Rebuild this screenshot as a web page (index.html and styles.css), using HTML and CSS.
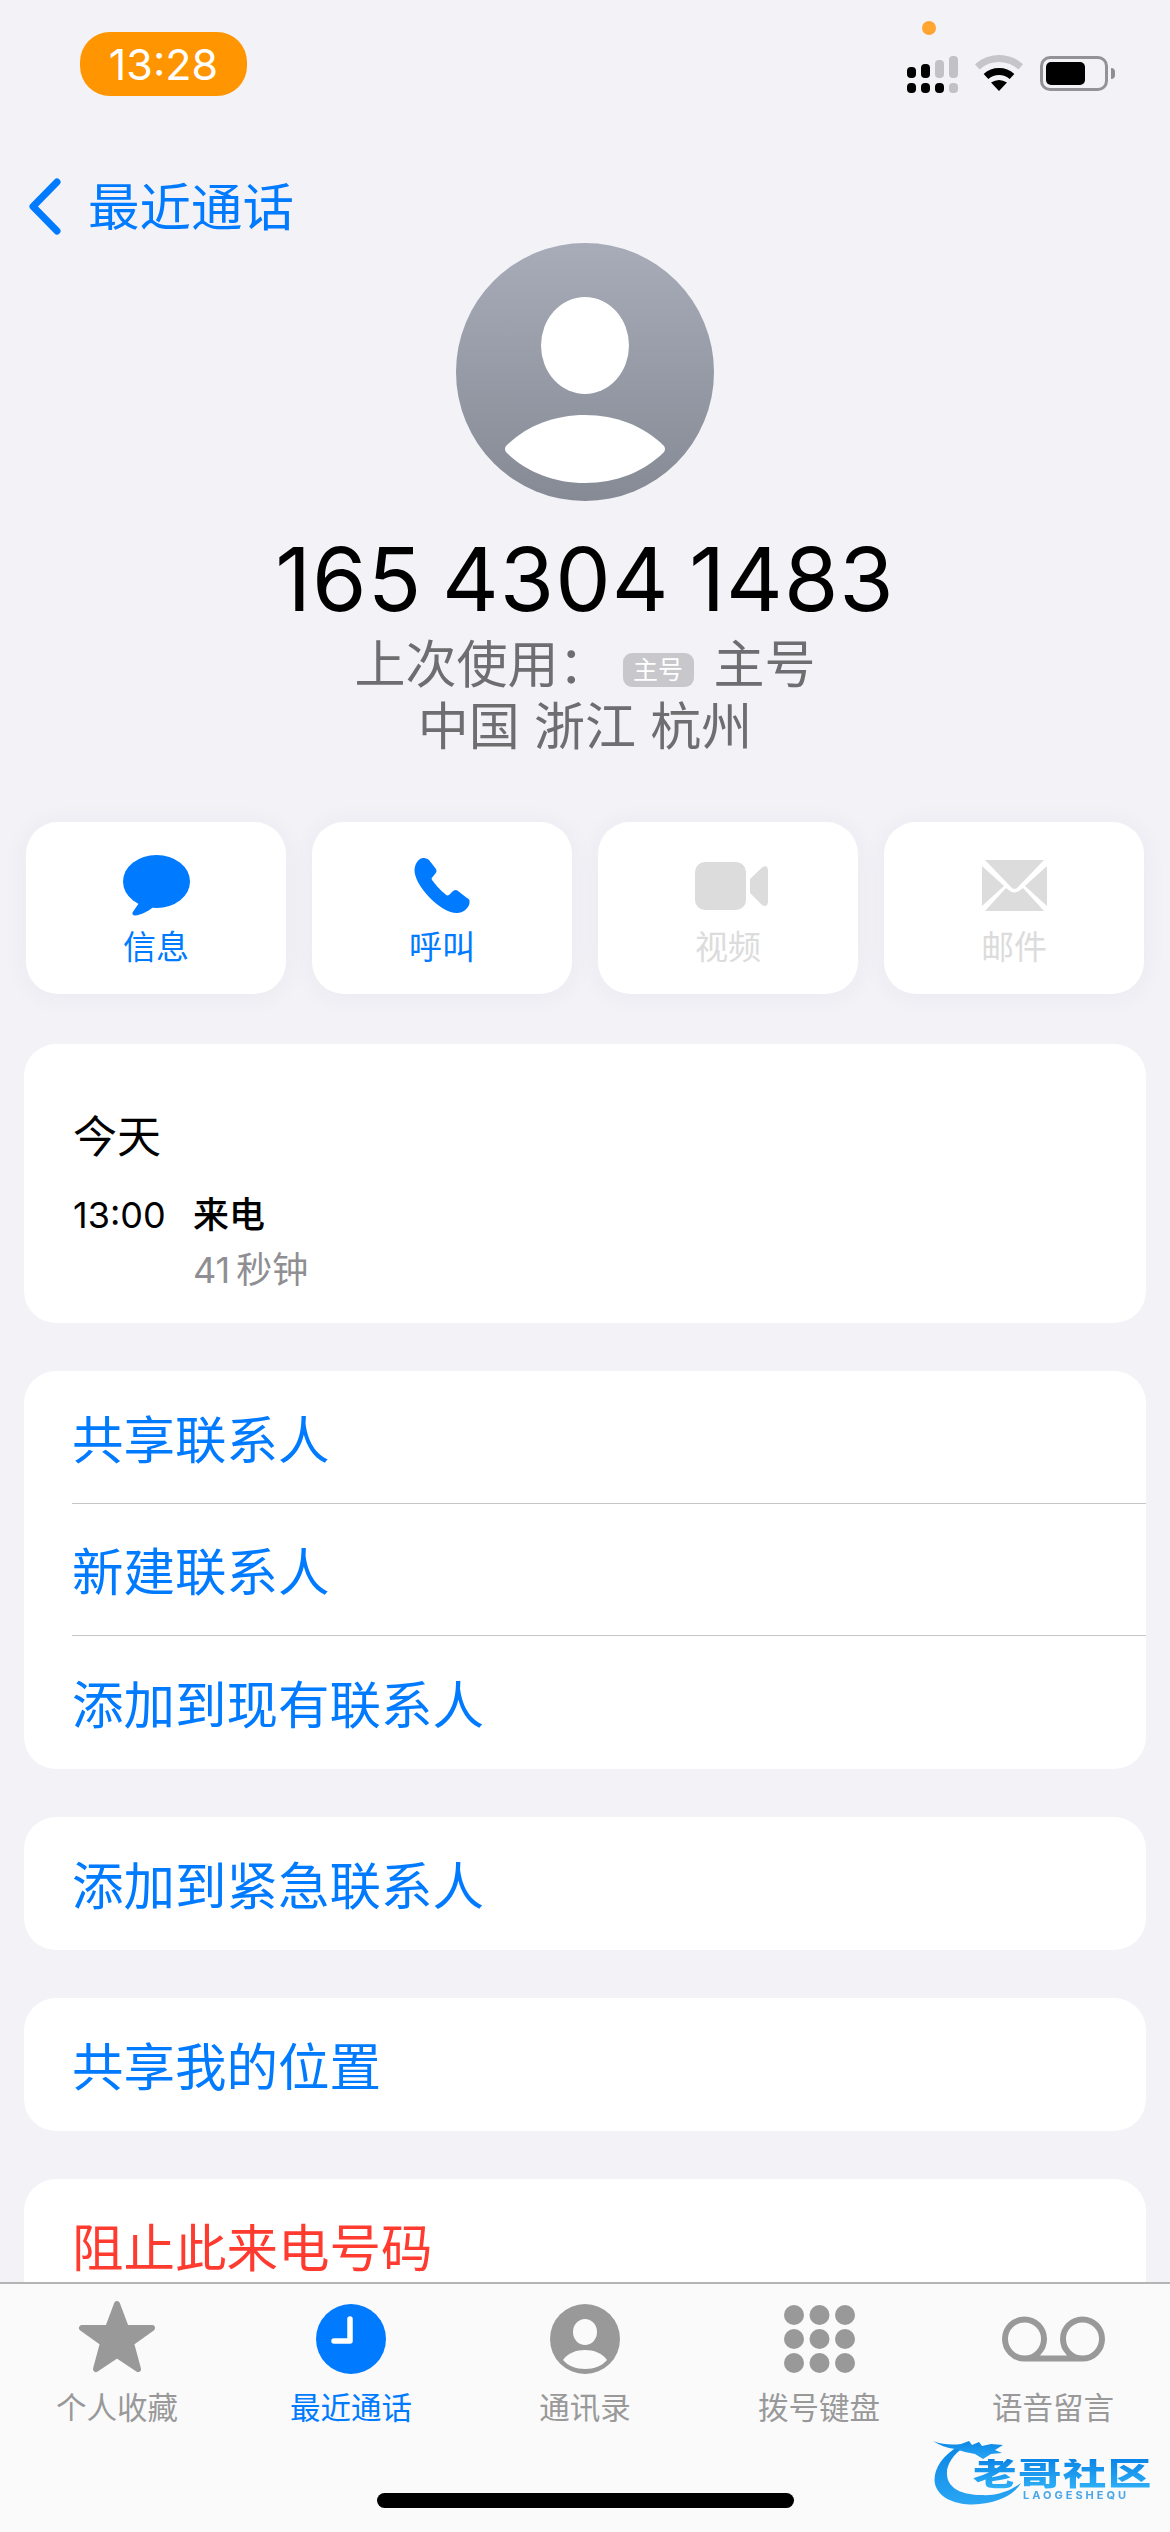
FILE: index.html
```html
<!DOCTYPE html>
<html lang="zh">
<head>
	<meta charset="utf-8">
	<link rel="stylesheet" href="styles.css">
	<title>最近通话</title>
</head>
<body>
	<div class="screen">
		<div class="status">
			<div class="clock-pill">13:28</div>
			<span class="mic-dot"></span>
			<div class="status-icons">
				<svg class="signal" width="51" height="37" viewBox="0 0 51 37">
					<rect x="0" y="11" width="9" height="11" rx="4"/>
					<rect x="14" y="8" width="9" height="14" rx="4"/>
					<rect class="off" x="28" y="4" width="9" height="18" rx="4"/>
					<rect class="off" x="42" y="0" width="9" height="22" rx="4"/>
					<rect x="0" y="27" width="9" height="10" rx="4"/>
					<rect x="14" y="27" width="9" height="10" rx="4"/>
					<rect x="28" y="27" width="9" height="10" rx="4"/>
					<rect class="off" x="42" y="27" width="9" height="10" rx="4"/>
				</svg>
				<svg class="wifi" width="48" height="36" viewBox="0 0 48 36">
					<path class="wifi-off" d="M2.3 11.8A32.5 32.5 0 0 1 45.7 11.8"/>
					<path class="wifi-on" d="M11 21.5A19.5 19.5 0 0 1 37 21.5"/>
					<path d="M24 36L16 27.5Q24 22.5 32 27.5Z"/>
				</svg>
				<div class="battery">
					<div class="battery-level"></div>
				</div>
				<span class="battery-tip"></span>
			</div>
		</div>

		<div class="content">
			<div class="nav">
				<svg class="chevron" width="33" height="57" viewBox="0 0 33 57">
					<path d="M29 4L5 28.5L29 53"/>
				</svg>
				<span class="nav-title">最近通话</span>
			</div>

			<div class="avatar">
				<svg width="258" height="258" viewBox="0 0 258 258">
					<defs>
						<linearGradient id="avatarFill" x1="0" y1="0" x2="0" y2="1">
							<stop offset="0" stop-color="#a7acb8"/>
							<stop offset="1" stop-color="#858a95"/>
						</linearGradient>
					</defs>
					<circle cx="129" cy="129" r="129" fill="url(#avatarFill)"/>
					<ellipse cx="129" cy="102.5" rx="44" ry="48.5" fill="#fff"/>
					<path d="M50 203C70 183 98 172 129 172C160 172 188 183 208 203Q210 206 208 209C188 229 160 240 129 240C98 240 70 229 50 209Q48 206 50 203Z" fill="#fff"/>
				</svg>
			</div>

			<div class="number">165 4304 1483</div>
			<div class="sub">上次使用：<span class="sim-tag">主号</span>主号</div>
			<div class="sub">中国 浙江 杭州</div>

			<div class="actions">
				<div class="action">
					<div class="action-icon">
						<svg width="67" height="61" viewBox="0 0 67 61">
							<ellipse cx="33.5" cy="26.5" rx="33.5" ry="26.5"/>
							<path d="M16 48L9.5 57.5Q9 60.5 12 60.5C18 60 25 56 30 52.5Z"/>
						</svg>
					</div>
					<span>信息</span>
				</div>
				<div class="action">
					<div class="action-icon">
						<svg width="56" height="55" viewBox="0 0 56 55">
							<path d="M9 0C6 0 1 4 .5 12C0 26 25 55 43 55C49 55 55 50 55.5 45C56 42 55 41 53 40L44 33C42 31 40 32 38 34L35 37C33 38 32 37 30 35C26 32 21 26 18 22C17 20 18 19.5 19 18.5L21 16C22.5 14.5 23 13 22 11L15 2C13 .5 11 0 9 0Z"/>
						</svg>
					</div>
					<span>呼叫</span>
				</div>
				<div class="action off">
					<div class="action-icon">
						<svg class="video" width="73" height="48" viewBox="0 0 73 48">
							<rect width="51" height="48" rx="10"/>
							<path d="M55 17L67 5.500Q73 2 73 9V39Q73 46 67 43L55 31Z"/>
						</svg>
					</div>
					<span>视频</span>
				</div>
				<div class="action off">
					<div class="action-icon">
						<svg width="65" height="51" viewBox="0 0 65 51">
							<path d="M3 0H62L36 27Q32.500 31 29 27Z"/>
							<path d="M0 6L22 26L0 46Z"/>
							<path d="M65 6L43 26L65 46Z"/>
							<path d="M3 51L24 28L28 31Q32.500 34 37 31L41 28L62 51Z"/>
						</svg>
					</div>
					<span>邮件</span>
				</div>
			</div>

			<div class="card calls">
				<div class="calls-day">今天</div>
				<div class="call">
					<span class="call-time">13:00</span>
					<div>
						<div class="call-type">来电</div>
						<div class="call-length">41 秒钟</div>
					</div>
				</div>
			</div>

			<div class="card">
				<div class="row"><span>共享联系人</span></div>
				<div class="row"><span>新建联系人</span></div>
				<div class="row"><span>添加到现有联系人</span></div>
			</div>

			<div class="card">
				<div class="row"><span>添加到紧急联系人</span></div>
			</div>

			<div class="card">
				<div class="row"><span>共享我的位置</span></div>
			</div>

			<div class="card">
				<div class="row danger"><span>阻止此来电号码</span></div>
			</div>
		</div>

		<div class="tabbar">
			<div class="tabs">
				<div class="tab">
					<div class="tab-icon">
						<svg width="76" height="74" viewBox="0 2 76 74">
							<path class="star" d="M38 4L47 28H73L52 43L59 69L38 55L17 69L24 43L3 28H29Z"/>
						</svg>
					</div>
					<span>个人收藏</span>
				</div>
				<div class="tab active">
					<div class="tab-icon">
						<svg width="70" height="70" viewBox="0 0 70 70">
							<circle cx="35" cy="35" r="35"/>
							<path class="hands" d="M34 15V37H18"/>
						</svg>
					</div>
					<span>最近通话</span>
				</div>
				<div class="tab">
					<div class="tab-icon">
						<svg width="70" height="70" viewBox="0 0 70 70">
							<circle cx="35" cy="35" r="35"/>
							<ellipse class="cutout" cx="35" cy="28" rx="12" ry="13"/>
							<path class="cutout" d="M13 56C18 49 26 46 35 46C44 46 52 49 57 56C52 62 44 65 35 65C26 65 18 62 13 56Z"/>
						</svg>
					</div>
					<span>通讯录</span>
				</div>
				<div class="tab">
					<div class="tab-icon">
						<svg width="71" height="70" viewBox="0 0 71 70">
							<circle cx="10" cy="11" r="10"/>
							<circle cx="35.500" cy="11" r="10"/>
							<circle cx="61" cy="11" r="10"/>
							<circle cx="10" cy="35" r="10"/>
							<circle cx="35.500" cy="35" r="10"/>
							<circle cx="61" cy="35" r="10"/>
							<circle cx="10" cy="59" r="10"/>
							<circle cx="35.500" cy="59" r="10"/>
							<circle cx="61" cy="59" r="10"/>
						</svg>
					</div>
					<span>拨号键盘</span>
				</div>
				<div class="tab">
					<div class="tab-icon">
						<svg width="103" height="46" viewBox="0 0 103 46">
							<path class="tape" d="M22.500 42.500H80.500A19.500 19.500 0 1 0 61 23A19.500 19.500 0 0 0 80.500 42.500M22.500 42.500A19.500 19.500 0 1 1 42 23A19.500 19.500 0 0 1 22.500 42.500"/>
						</svg>
					</div>
					<span>语音留言</span>
				</div>
			</div>
			<div class="home-bar"></div>

			<!-- community mark laid over the corner of the bar -->
			<div class="stamp">
				<svg class="stamp-dragon" width="112" height="70" viewBox="0 0 112 70">
					<defs>
						<linearGradient id="dragonFill" x1="0" y1="0" x2="0" y2="1">
							<stop offset="0" stop-color="#0a86e6"/>
							<stop offset="1" stop-color="#2aa6f4"/>
						</linearGradient>
					</defs>
					<path d="M26 9C6 20 -2 38 3 50C10 66 34 70 54 66C70 63 82 56 88 46C76 55 62 59 48 58C30 58 15 52 14 38C13 28 20 18 30 11Z" fill="url(#dragonFill)"/>
					<path d="M0 4C10 8 20 8 28 7L36 4L39 8L46 5L49 9L58 7L70 8L62 13L69 16L58 17L50 22L42 17L32 15L22 12C14 11 6 8 0 4Z" fill="url(#dragonFill)"/>
				</svg>
				<div class="stamp-name">老哥社区</div>
				<div class="stamp-latin">LAOGESHEQU</div>
			</div>
		</div>
	</div>
</body>
</html>
```

FILE: styles.css
```css
html, body {
	margin: 0;
	padding: 0;
}

body {
	font-family: Inter, "Noto Sans CJK SC", sans-serif;
	background-color: #f2f2f7;
	color: #000;
}

.screen {
	position: relative;
	display: flex;
	flex-direction: column;
	width: 1170px;
	height: 2532px;
	overflow: hidden;
}

/* status bar */
.status {
	position: relative;
	display: flex;
	justify-content: space-between;
	flex: none;
	height: 110px;
}

.clock-pill {
	width: 167px;
	height: 64px;
	margin: 32px 0 0 80px;
	border-radius: 30px;
	background-color: #ff9500;
	color: #fff;
	font-size: 43px;
	line-height: 64px;
	text-align: center;
}

.mic-dot {
	position: absolute;
	left: 922px;
	top: 21px;
	width: 14px;
	height: 14px;
	border-radius: 50%;
	background-color: #ffa530;
}

.status-icons {
	display: flex;
	align-items: flex-start;
	margin: 56px 55px 0 0;
}

.signal {
	fill: #000;
}

.signal .off {
	fill: #c2c2c6;
}

.wifi {
	margin: -1px 0 0 17px;
}

.wifi-off, .wifi-on {
	fill: none;
	stroke-width: 7;
}

.wifi-off {
	stroke: #c6c6c8;
}

.wifi-on {
	stroke: #000;
}

.battery {
	box-sizing: border-box;
	width: 68px;
	height: 35px;
	margin-left: 17px;
	padding: 3px;
	border: 3px solid #939397;
	border-radius: 10px;
}

.battery-level {
	width: 39px;
	height: 23px;
	border-radius: 5px;
	background-color: #000;
}

.battery-tip {
	width: 4px;
	height: 11px;
	margin: 12px 0 0 3px;
	border-radius: 0 5px 5px 0;
	background-color: #8e8e93;
}

/* scrolling part */
.content {
	flex: 1;
	min-height: 0;
	overflow: hidden;
}

.nav {
	display: flex;
	align-items: center;
	height: 57px;
	margin-top: 68px;
	padding-left: 28px;
	color: #007aff;
}

.chevron {
	fill: none;
	stroke: #007aff;
	stroke-width: 7;
	stroke-linecap: round;
	stroke-linejoin: round;
}

.nav-title {
	margin: 2px 0 0 27px;
	font-size: 51.500px;
	line-height: 57px;
}

.avatar {
	display: flex;
	justify-content: center;
	margin-top: 8px;
}

.avatar svg {
	display: block;
}

.number {
	margin-top: 28px;
	font-size: 88px;
	letter-spacing: 1px;
	word-spacing: -6px;
	line-height: 100px;
	text-align: center;
}

.sub {
	color: #6e6e70;
	font-size: 51px;
	line-height: 62px;
	text-align: center;
}

.number + .sub {
	margin-top: 5px;
}

.sim-tag {
	display: inline-block;
	width: 71px;
	height: 34px;
	margin: 0 20px 0 13px;
	border-radius: 9px;
	background-color: #c7c7cc;
	color: #fff;
	font-size: 25px;
	line-height: 34px;
	vertical-align: 4px;
}

.actions {
	display: flex;
	gap: 26px;
	margin: 64px 26px 0;
}

.action {
	display: flex;
	flex-direction: column;
	align-items: center;
	width: 260px;
	height: 172px;
	border-radius: 32px;
	background-color: #fff;
	box-shadow: 0 2px 26px rgba(60, 60, 90, 0.05);
	color: #007aff;
	font-size: 33px;
	line-height: 40px;
}

.action.off {
	color: #dcdcdc;
}

.action-icon {
	display: flex;
	align-items: center;
	justify-content: center;
	height: 61px;
	margin: 33px 0 11px;
}

.action-icon svg {
	fill: currentColor;
}

.action-icon .video {
	margin-left: 7px;
}

.card {
	margin: 48px 24px 0;
	border-radius: 32px;
	background-color: #fff;
}

.calls {
	box-sizing: border-box;
	height: 279px;
	margin-top: 50px;
	padding: 63px 0 0 49px;
}

.calls-day {
	font-size: 44px;
	line-height: 60px;
}

.call {
	display: flex;
	margin-top: 23px;
	font-size: 36px;
	line-height: 50px;
}

.call-time {
	width: 120px;
}

.call-type {
	font-weight: 500;
}

.call-length {
	margin-top: 5px;
	color: #8e8e93;
	word-spacing: -4px;
}

.row {
	box-sizing: border-box;
	display: flex;
	align-items: center;
	height: 133px;
	margin-left: 48px;
	padding-bottom: 2px;
	color: #007aff;
	font-size: 51.500px;
}

.row:not(:only-child) {
	height: 132px;
}

.row + .row {
	border-top: 1px solid #c6c6c8;
}

.row + .row:last-child {
	height: 134px;
}

.danger {
	color: #ff3b30;
}

/* tab bar */
.tabbar {
	position: relative;
	flex: none;
	box-sizing: border-box;
	height: 250px;
	border-top: 2px solid #b4b4b4;
	background-color: #fafafb;
}

.tabs {
	display: grid;
	grid-template-columns: repeat(5, 1fr);
	padding-top: 18px;
}

.tab {
	display: flex;
	flex-direction: column;
	align-items: center;
	color: #999;
	font-size: 30.500px;
	line-height: 40px;
}

.tab.active {
	color: #007aff;
}

.tab-icon {
	display: flex;
	align-items: center;
	justify-content: center;
	height: 74px;
	margin-bottom: 12px;
}

.tab-icon svg {
	fill: currentColor;
	overflow: visible;
}

.star {
	stroke: currentColor;
	stroke-width: 6;
	stroke-linejoin: round;
}

.hands {
	fill: none;
	stroke: #fff;
	stroke-width: 5.500;
	stroke-linecap: round;
	stroke-linejoin: round;
}

.cutout {
	fill: #fafafb;
}

.tape {
	fill: none;
	stroke: currentColor;
	stroke-width: 6;
}

.home-bar {
	width: 417px;
	height: 15px;
	margin: 65px auto 0;
	border-radius: 8px;
	background-color: #000;
}

.stamp {
	position: absolute;
	left: 933px;
	top: 153px;
	width: 222px;
	height: 70px;
	filter: blur(0.7px);
}

.stamp-dragon {
	position: absolute;
	left: 0;
	top: 0;
}

.stamp-name {
	position: absolute;
	left: 40px;
	top: 22px;
	font-size: 32px;
	font-weight: 900;
	letter-spacing: 1px;
	line-height: 30px;
	white-space: nowrap;
	transform: scaleX(1.36);
	transform-origin: left;
	background-image: linear-gradient(#0b85e6, #2fb0f7);
	-webkit-background-clip: text;
	background-clip: text;
	color: transparent;
}

.stamp-latin {
	position: absolute;
	left: 90px;
	top: 53px;
	color: #4aa6e8;
	font-size: 11px;
	font-weight: 700;
	letter-spacing: 3px;
	line-height: 10px;
	white-space: nowrap;
}
```
